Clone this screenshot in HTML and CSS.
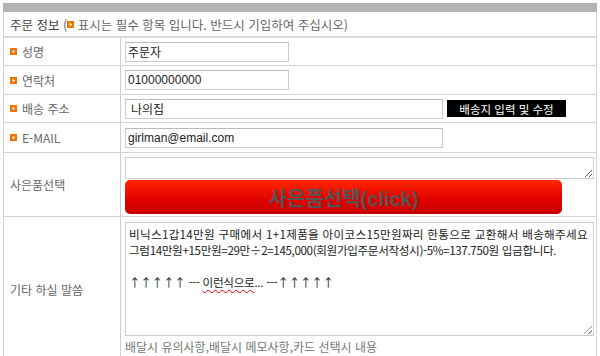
FILE: index.html
```html
<!DOCTYPE html>
<html lang="ko">
<head>
  <meta charset="UTF-8">
  <title>주문 정보</title>
  <link rel="stylesheet" href="styles.css">
</head>
<body>

  <div class="topbar"></div>

  <div class="order">
    <!-- 안내 -->
    <div class="head">
      <span class="head-title">주문 정보</span>&nbsp;(<svg class="bullet" viewBox="0 0 8 8"><rect width="8" height="8" fill="#ee7300"/><path d="M3 2 L6 4 L3 6 Z" fill="#fff"/></svg>&nbsp;표시는 필수 항목 입니다. 반드시 기입하여 주십시오)
    </div>

    <div class="row r1">
      <div class="label"><svg class="bullet" viewBox="0 0 8 8"><rect width="8" height="8" fill="#ee7300"/><path d="M3 2 L6 4 L3 6 Z" fill="#fff"/></svg>성명</div>
      <div class="field"><input type="text" class="inp short" value="주문자"></div>
    </div>

    <div class="row r2">
      <div class="label"><svg class="bullet" viewBox="0 0 8 8"><rect width="8" height="8" fill="#ee7300"/><path d="M3 2 L6 4 L3 6 Z" fill="#fff"/></svg>연락처</div>
      <div class="field"><input type="text" class="inp short" value="01000000000"></div>
    </div>

    <div class="row r3">
      <div class="label"><svg class="bullet" viewBox="0 0 8 8"><rect width="8" height="8" fill="#ee7300"/><path d="M3 2 L6 4 L3 6 Z" fill="#fff"/></svg>배송 주소</div>
      <div class="field">
        <input type="text" class="inp long addr" value="나의집">
        <span class="btn-black">배송지 입력 및 수정</span>
      </div>
    </div>

    <div class="row r4">
      <div class="label"><svg class="bullet" viewBox="0 0 8 8"><rect width="8" height="8" fill="#ee7300"/><path d="M3 2 L6 4 L3 6 Z" fill="#fff"/></svg>E-MAIL</div>
      <div class="field"><input type="text" class="inp long" value="girlman@email.com"></div>
    </div>

    <div class="row r5">
      <div class="label plain">사은품선택</div>
      <div class="field col">
        <textarea class="gift-area"></textarea>
        <div class="btn-gift">사은품선택(click)</div>
      </div>
    </div>

    <div class="row r6">
      <div class="label plain">기타 하실 말씀</div>
      <div class="field col">
        <div class="memo">
          <div class="wide">비닉스1갑14만원 구매에서 1+1제품을 아이코스15만원짜리 한통으로 교환해서 배송해주세요</div>
          <div class="tight">그럼14만원+15만원=29만÷2=145,000(회원가입주문서작성시)-5%=137.750원 입금합니다.</div>
          <div>&nbsp;</div>
          <div class="arrows">↑↑↑↑↑ --- <span class="typo">이런식으로</span>... ---↑↑↑↑↑</div>
        </div>
        <div class="note">배달시 유의사항,배달시 메모사항,카드 선택시 내용</div>
      </div>
    </div>
  </div>

</body>
</html>
```

FILE: styles.css
```css
body {
  margin: 3px;
  font-family: "Noto Sans CJK KR", sans-serif;
  font-size: 12px;
  color: #666;
  background: #fff;
}

.topbar {
  width: 595px;
  height: 9px;
  background: #b3b3b3;
}

.order {
  width: 595px;
  box-sizing: border-box;
  border-left: 1px solid #d0d0d0;
  border-right: 2px solid #d6d6d6;
}

.head {
  height: 24px;
  border-bottom: 2px solid #dcdcdc;
  padding-left: 6px;
  display: flex;
  align-items: center;
  font-size: 12.5px;
  color: #666;
}

.head-title {
  color: #444;
}

.bullet {
  width: 7px;
  height: 7px;
  flex-shrink: 0;
}

.row {
  display: grid;
  grid-template-columns: 117px 1fr;
  border-bottom: 1px solid #d4d4d4;
}

.r1 { height: 27px; }
.r2 { height: 28px; }
.r3 { height: 27px; }
.r4 { height: 29px; }
.r5 { height: 63px; }
.r6 { height: 145px; }

.label {
  border-right: 1px solid #cfcfcf;
  display: flex;
  align-items: center;
  gap: 5px;
  padding-left: 6px;
}

.field {
  display: flex;
  align-items: center;
  padding: 0 3px 0 4px;
  gap: 4px;
}

.field.col {
  flex-direction: column;
  align-items: flex-start;
  gap: 1px;
  padding-top: 4px;
}

.inp {
  height: 20px;
  box-sizing: border-box;
  border: 1px solid #ccc;
  border-top-color: #bbb;
  padding: 0 2px;
  font-family: "Liberation Sans", "Noto Sans CJK KR", sans-serif;
  font-size: 12px;
  color: #222;
  margin: 0;
}

.short { width: 164px; }
.long { width: 318px; }
.addr { padding-left: 5px; }

.btn-black {
  background: #000;
  color: #fff;
  height: 17px;
  width: 119px;
  display: flex;
  align-items: center;
  justify-content: center;
  font-size: 11.5px;
}

.gift-area {
  width: 469px;
  height: 22px;
  box-sizing: border-box;
  border: 1px solid #ccc;
  margin: 0;
  resize: vertical;
}

.btn-gift {
  width: 437px;
  height: 34px;
  border-radius: 5px;
  background: linear-gradient(#ff2600, #e00000 60%, #c80000);
  color: #555;
  font-family: "Liberation Sans", "Noto Sans CJK KR", sans-serif;
  font-weight: bold;
  font-size: 20px;
  display: flex;
  align-items: center;
  justify-content: center;
}

.r6 .field.col {
  padding-top: 5px;
}

.memo {
  position: relative;
  width: 469px;
  height: 114px;
  box-sizing: border-box;
  border: 1px solid #ccc;
  padding: 3px 3px;
  font-size: 11.6px;
  line-height: 16px;
  color: #222;
  white-space: nowrap;
  overflow: hidden;
}

.memo .wide { letter-spacing: 0.3px; }
.memo .tight { letter-spacing: -0.35px; }
.memo .arrows { letter-spacing: -0.3px; }

/* 크기 조절 손잡이 */
.memo::after {
  content: "";
  position: absolute;
  right: 1px;
  bottom: 1px;
  width: 8px;
  height: 8px;
  background: linear-gradient(135deg, transparent 48%, #999 48%, #999 56%, transparent 56%, transparent 74%, #999 74%, #999 82%, transparent 82%);
}

.typo {
  text-decoration: underline wavy #e00;
  text-decoration-thickness: 1px;
  text-underline-offset: 2px;
}

.note {
  padding-top: 1px;
  color: #777;
}
```
